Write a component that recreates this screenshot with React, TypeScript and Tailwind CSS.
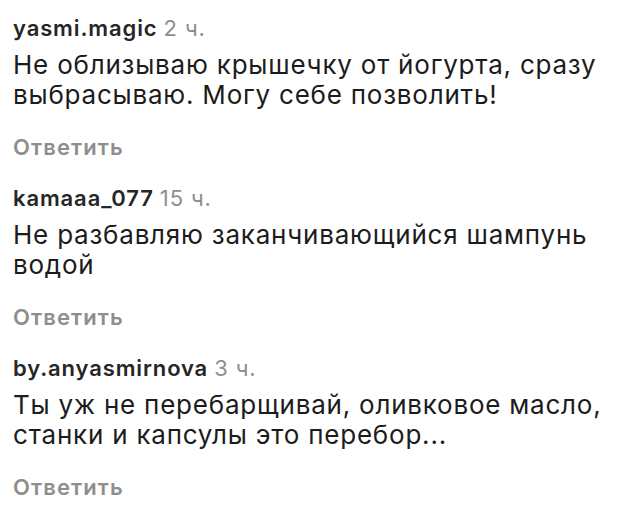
const comments = [
  {
    user: 'yasmi.magic',
    time: '2 ч.',
    text: 'Не облизываю крышечку от йогурта, сразу выбрасываю. Могу себе позволить!',
  },
  {
    user: 'kamaaa_077',
    time: '15 ч.',
    text: 'Не разбавляю заканчивающийся шампунь водой',
  },
  {
    user: 'by.anyasmirnova',
    time: '3 ч.',
    text: 'Ты уж не перебарщивай, оливковое масло, станки и капсулы это перебор...',
  },
];

function Comment({ user, time, text }: { user: string; time: string; text: string }) {
  return (
    <div className="pt-[15px] pb-[10px]">
      <div className="text-[22px] leading-[26px] tracking-[0.04em]">
        <span className="font-semibold text-[#262626]">{user}</span>
        <span className="ml-[6px] text-[#8e8e8e]">{time}</span>
      </div>
      <p className="mt-[9px] text-[26px] leading-[30px] tracking-[0.03em] text-[#1c1c1c]">
        {text}
      </p>
      <div className="mt-[24px] text-[22px] leading-[26px] tracking-[0.05em] font-semibold text-[#8e8e8e]">
        Ответить
      </div>
    </div>
  );
}

export default function App() {
  return (
    <div
      className="w-[640px] h-[511px] bg-white pl-[13px] pr-[10px] overflow-hidden"
      style={{ fontFamily: 'Inter, "Liberation Sans", sans-serif' }}
    >
      {comments.map((c) => (
        <Comment key={c.user} {...c} />
      ))}
    </div>
  );
}
